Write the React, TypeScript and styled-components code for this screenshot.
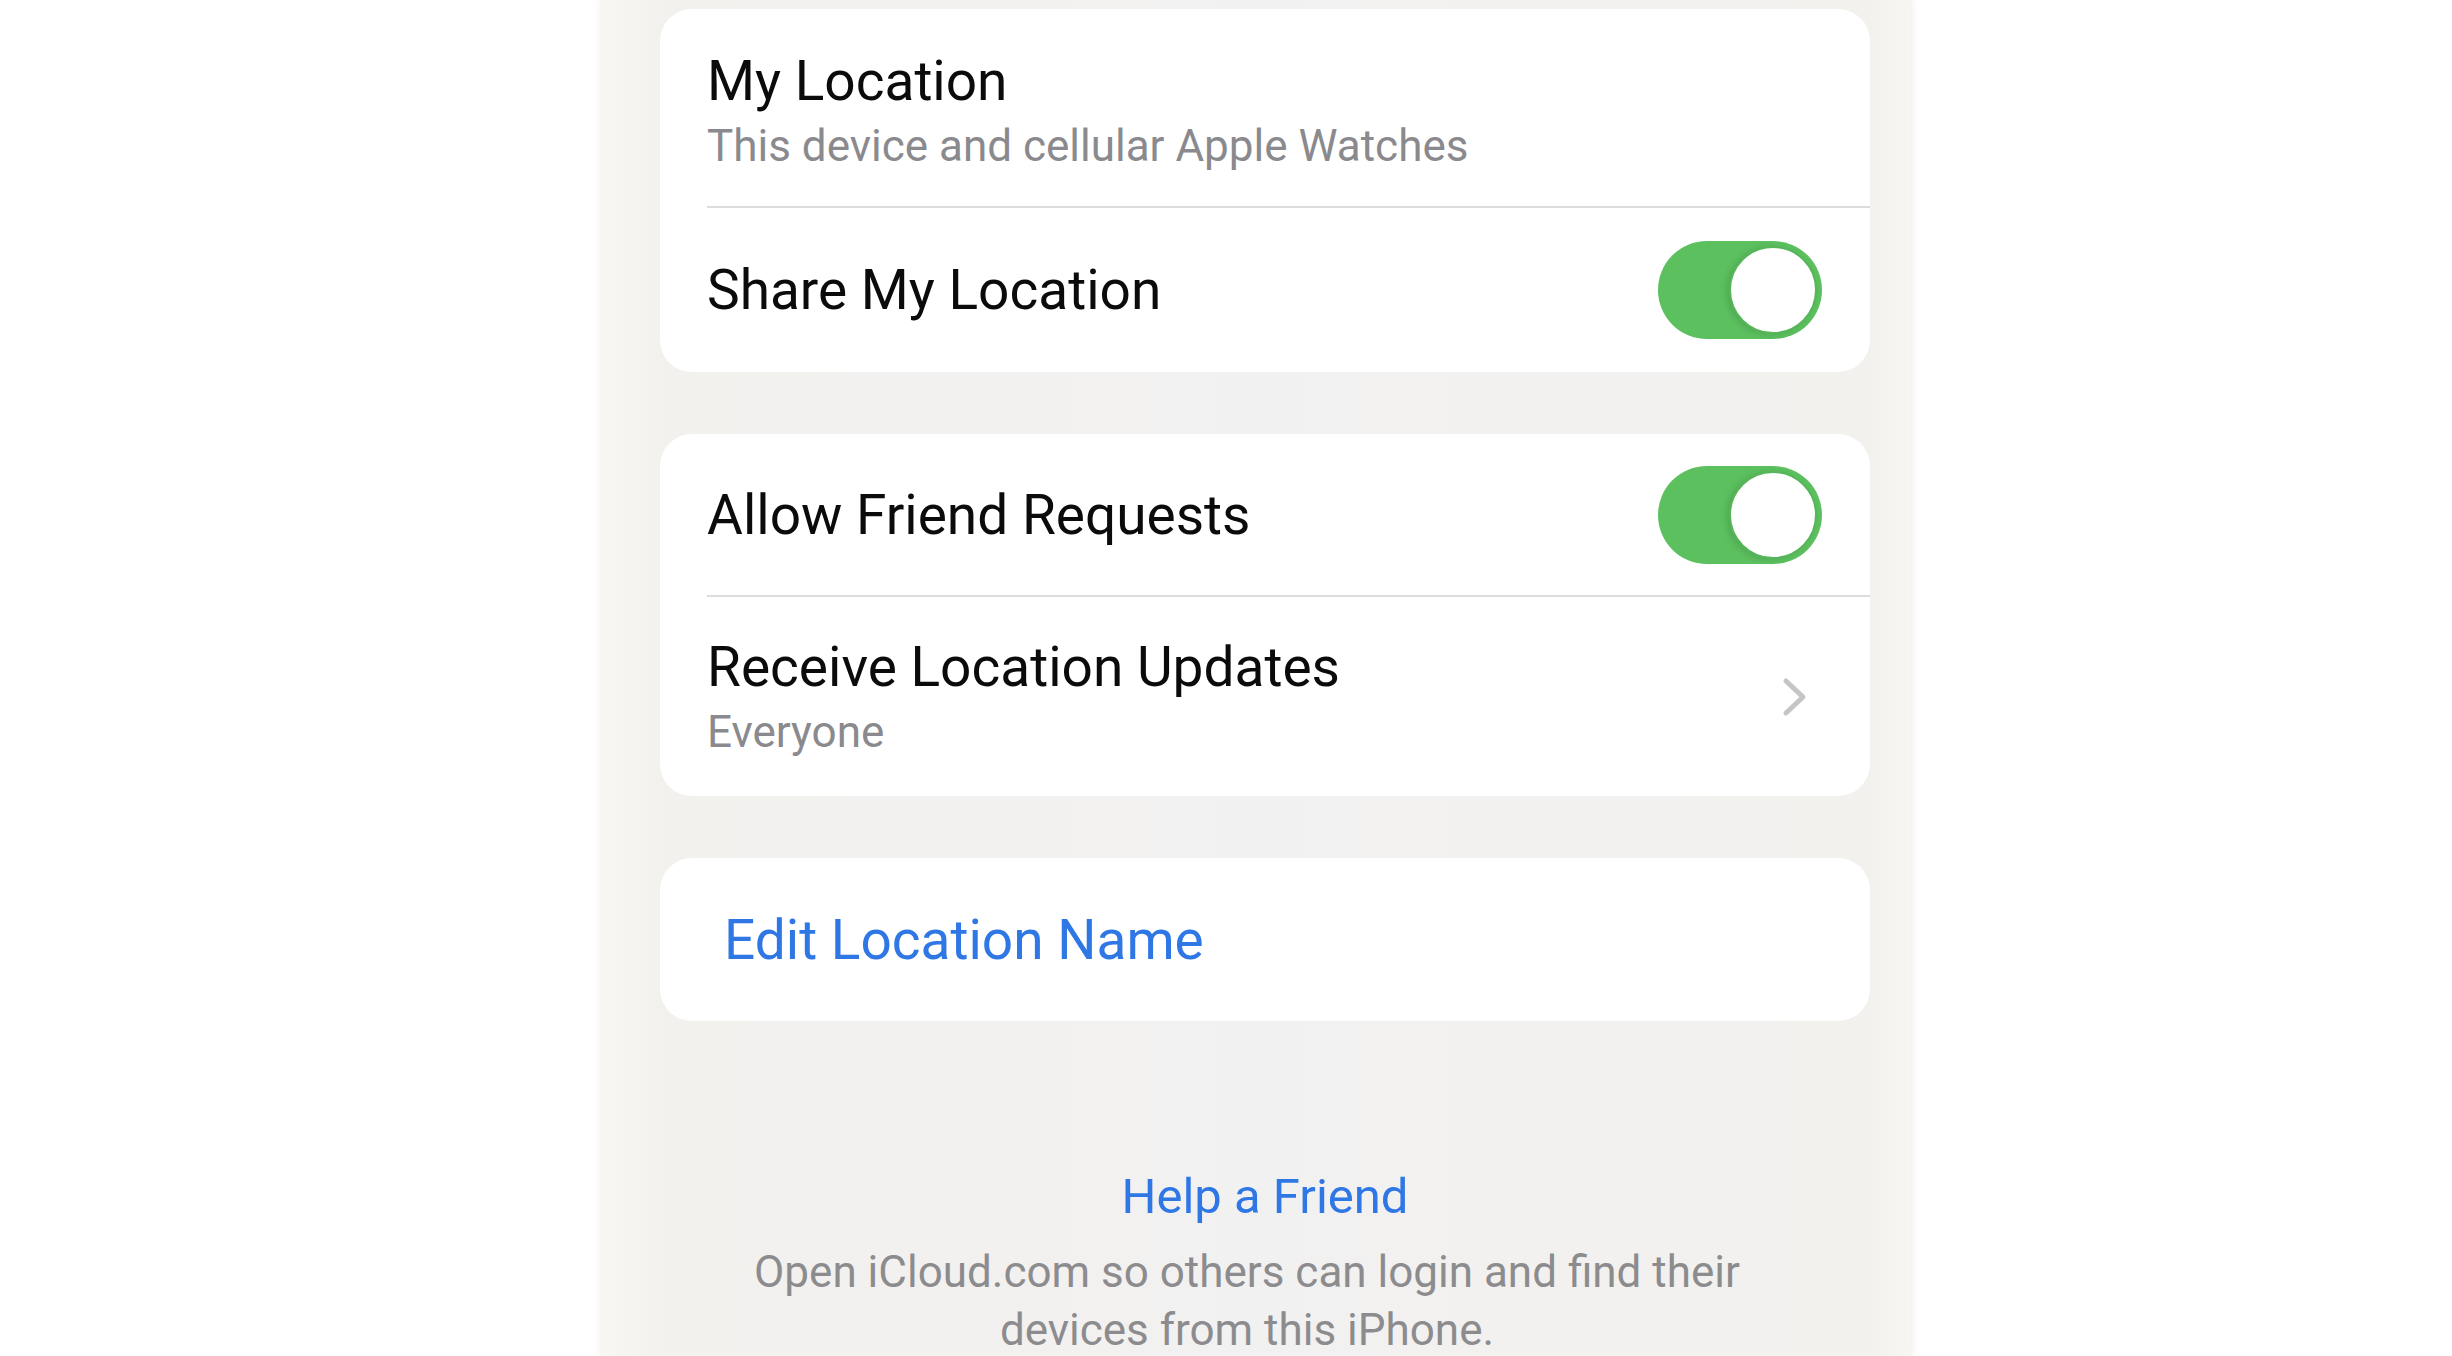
import React from "react";
import styled, { createGlobalStyle } from "styled-components";

const GlobalStyle = createGlobalStyle`
  html, body {
    margin: 0;
    padding: 0;
    background: #ffffff;
  }
  body {
    font-family: Roboto, "Liberation Sans", Arial, sans-serif;
    -webkit-font-smoothing: antialiased;
  }
`;

const Page = styled.div`
  display: flex;
  height: 1356px;
  padding-left: 602px;
  overflow: hidden;
`;

const Screen = styled.main`
  width: 1309px;
  height: 1356px;
  box-sizing: border-box;
  padding: 9px 41px 0 58px;
  display: flex;
  flex-direction: column;
  background: linear-gradient(
    to right,
    #f9f7f4 0,
    #f3f1ee 58px,
    #f2f1f1 50%,
    #f3f1ee calc(100% - 41px),
    #f8f6f3 100%
  );
  box-shadow: 0 0 6px 1px rgba(238, 234, 229, 0.9);
`;

const Groups = styled.div`
  display: flex;
  flex-direction: column;
  gap: 62px;
`;

const Card = styled.section`
  display: flex;
  flex-direction: column;
  background: #ffffff;
  border-radius: 32px;
  overflow: hidden;
`;

const Row = styled.div<{ $height: number; $inset?: number; $trail?: number; $padTop?: number }>`
  display: flex;
  align-items: center;
  justify-content: space-between;
  box-sizing: border-box;
  height: ${({ $height }) => $height}px;
  padding: ${({ $padTop = 0 }) => $padTop}px ${({ $trail = 48 }) => $trail}px 0
    ${({ $inset = 47 }) => $inset}px;
`;

const Divider = styled.div`
  height: 2px;
  margin-left: 47px;
  background: #dcdcde;
`;

const TextStack = styled.div`
  display: flex;
  flex-direction: column;
  gap: 4px;
`;

const Title = styled.div<{ $link?: boolean }>`
  font-size: 55px;
  line-height: 66px;
  color: ${({ $link }) => ($link ? "#2e77e4" : "#0b0b0b")};
  white-space: nowrap;
`;

const Subtitle = styled.div`
  font-size: 44px;
  line-height: 56px;
  color: #8a8a8e;
  white-space: nowrap;
`;

const Track = styled.div<{ $on: boolean }>`
  display: flex;
  align-items: center;
  justify-content: ${({ $on }) => ($on ? "flex-end" : "flex-start")};
  box-sizing: border-box;
  width: 164px;
  height: 98px;
  padding: 0 5px;
  border-radius: 49px;
  background: ${({ $on }) => ($on ? "#5cc05f" : "#e9e9eb")};
`;

const Knob = styled.span`
  width: 88px;
  height: 88px;
  box-sizing: border-box;
  border-radius: 50%;
  background: #ffffff;
  border: 2px solid #56b659;
  box-shadow: -3px 1px 6px rgba(0, 0, 0, 0.12);
`;

const Footer = styled.footer`
  display: flex;
  flex-direction: column;
  align-items: center;
  margin-top: 146px;
`;

const HelpLink = styled.div`
  font-size: 49px;
  line-height: 60px;
  color: #2e77e4;
`;

const FooterNote = styled.p`
  margin: 16px 36px 0 0;
  font-size: 44px;
  line-height: 58px;
  color: #8c8c8e;
  text-align: center;
`;

const Toggle: React.FC<{ on?: boolean }> = ({ on = true }) => (
  <Track $on={on}>
    <Knob />
  </Track>
);

const Chevron: React.FC = () => (
  <svg width="26" height="40" viewBox="0 0 26 40" fill="none">
    <polyline
      points="4,4 21,20 4,36"
      stroke="#c5c5c8"
      strokeWidth="5"
      strokeLinecap="round"
      strokeLinejoin="round"
    />
  </svg>
);

export default function App() {
  return (
    <>
      <GlobalStyle />
      <Page>
        <Screen>
          <Groups>
            <Card>
              <Row $height={197} $padTop={6}>
                <TextStack>
                  <Title>My Location</Title>
                  <Subtitle>This device and cellular Apple Watches</Subtitle>
                </TextStack>
              </Row>
              <Divider />
              <Row $height={164}>
                <Title>Share My Location</Title>
                <Toggle />
              </Row>
            </Card>

            <Card>
              <Row $height={161}>
                <Title>Allow Friend Requests</Title>
                <Toggle />
              </Row>
              <Divider />
              <Row $height={199} $trail={62}>
                <TextStack>
                  <Title>Receive Location Updates</Title>
                  <Subtitle>Everyone</Subtitle>
                </TextStack>
                <Chevron />
              </Row>
            </Card>

            <Card>
              <Row $height={163} $inset={64}>
                <Title $link>Edit Location Name</Title>
              </Row>
            </Card>
          </Groups>

          <Footer>
            <HelpLink>Help a Friend</HelpLink>
            <FooterNote>
              Open iCloud.com so others can login and find their
              <br />
              devices from this iPhone.
            </FooterNote>
          </Footer>
        </Screen>
      </Page>
    </>
  );
}
